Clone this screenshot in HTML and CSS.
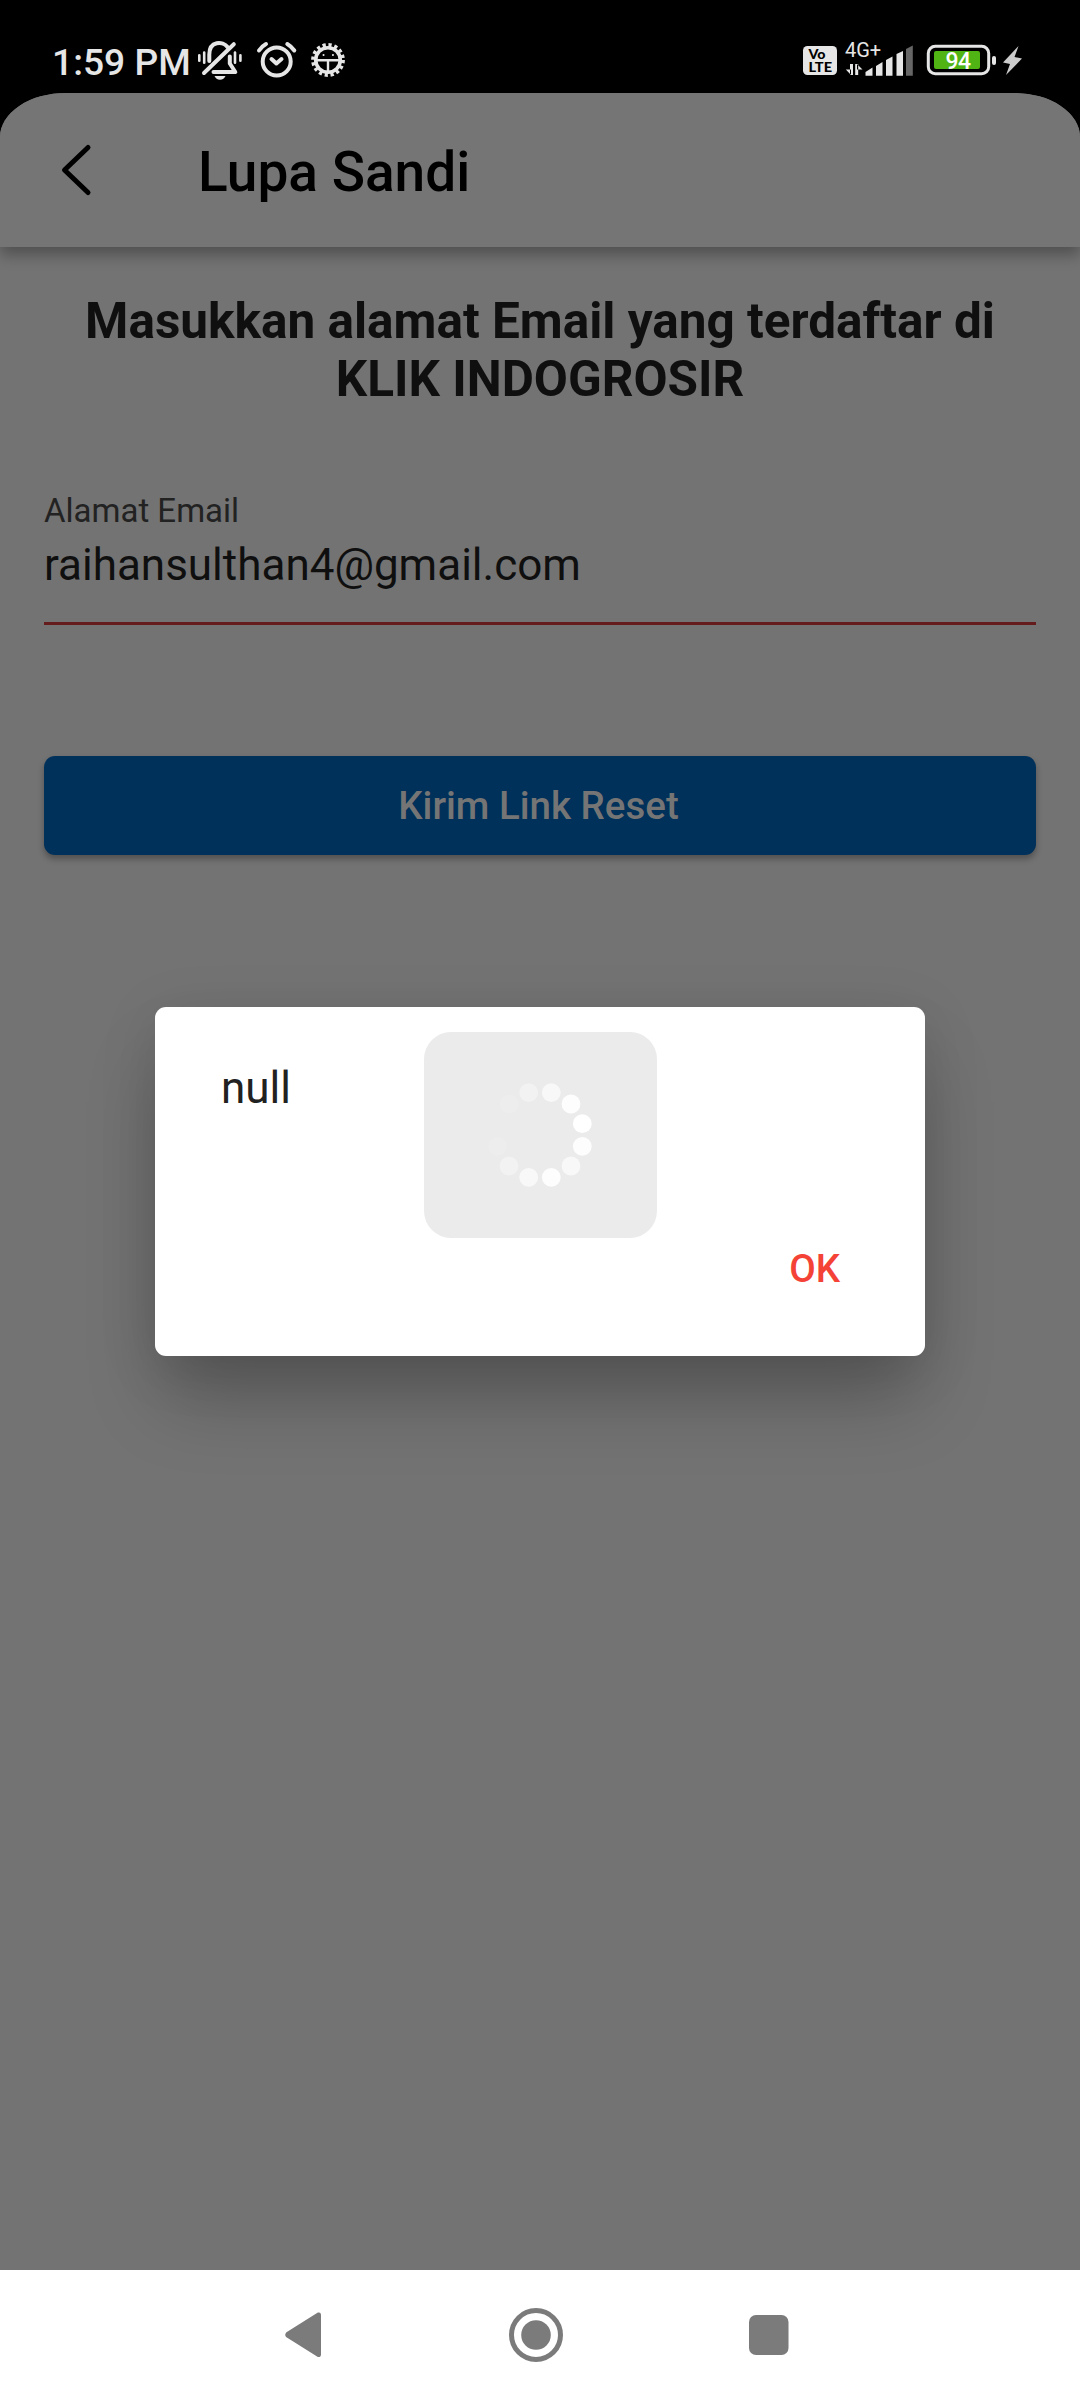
FILE: index.html
```html
<!DOCTYPE html>
<html lang="id">
<head>
<meta charset="utf-8">
<title>Lupa Sandi</title>
<link rel="stylesheet" href="styles.css">
</head>
<body>
<div class="screen">
  <header class="status">
    <span class="clock">1:59 PM</span>
    <svg class="status-left" width="156" height="48" viewBox="196 36 156 48" fill="none" stroke="#e6e6e6" stroke-linecap="round" stroke-linejoin="round">
      <g stroke-width="4">
        <path d="M233.8 44.2 204 73"/>
        <path d="M209.3 61V54.500C209.300 40.500 223 41 227.500 47"/>
        <path d="M229.800 56.500V63.500L235.300 72H213.500"/>
      </g>
      <path d="M199.300 55.200V60.800M204.200 52.500V62.800M235 52.500V62.800M240.400 55.200V60.800" stroke-width="2.600"/>
      <path d="M214.500 76H225.500Q224 79.700 220 79.700T214.500 76Z" fill="#e6e6e6" stroke="none"/>
      <circle cx="276.700" cy="61.500" r="14" stroke-width="4"/>
      <path d="M259 50.500Q261.500 46.500 266 44M287.300 44Q291.500 46.500 294.300 50.500" stroke-width="4"/>
      <path d="M271.500 59 276.400 63.500 281.500 59" stroke-width="4"/>
      <circle cx="328" cy="60" r="15" stroke-width="3.800" stroke-dasharray="3.200 2.690" stroke-linecap="butt"/>
      <circle cx="328" cy="60" r="12.300" stroke-width="3.600"/>
      <path d="M316 60.300H340M328 61V72" stroke-width="2.400"/>
      <path d="M323.500 55H323.600M332.900 55H333" stroke-width="2"/>
    </svg>
    <svg class="status-right" width="226" height="48" viewBox="800 36 226 48">
      <rect x="803" y="46" width="34" height="29" rx="4.500" fill="#e6e6e6"/>
      <text class="volte" x="808.500" y="58.700" textLength="17" lengthAdjust="spacingAndGlyphs">Vo</text>
      <text class="volte" x="808.500" y="71.700" textLength="23.500" lengthAdjust="spacingAndGlyphs">LTE</text>
      <text class="network" x="845" y="56.500" textLength="36">4G+</text>
      <g fill="#e6e6e6">
        <path d="M850 64V75H853V64ZM851 75 845.800 69.500H851ZM855.200 64V75H858.200V64ZM857 64 862.500 69.500H857Z"/>
        <path d="M865.500 75.700V72L872.500 67.500V75.700ZM876 75.700V66L882.500 62V75.700ZM886 75.700V60L892.500 56.500V75.700ZM896.500 75.700V54L903 51V75.700Z"/>
        <path d="M906 75.700V49L912.800 45.500V75.700Z" fill="#666"/>
        <rect x="992" y="56" width="4" height="9" rx="2"/>
        <path d="M1018.500 46 1003 62.500 1010 64 1006 75 1022 58.500 1014.500 57Z" fill="#ccc"/>
      </g>
      <rect x="928.300" y="46.300" width="60.400" height="27.400" rx="7" fill="none" stroke="#e6e6e6" stroke-width="3"/>
      <rect x="934" y="51" width="46" height="18" rx="2" fill="#50b414"/>
      <text class="charge" x="945.500" y="68.500" textLength="25.500">94</text>
    </svg>
  </header>

  <main class="app">
    <nav class="appbar">
      <svg class="back" width="34" height="56" viewBox="0 0 34 56" fill="none" stroke="#000" stroke-width="5" stroke-linecap="round" stroke-linejoin="round"><path d="M28 5.500 4.500 28 28 50.500"/></svg>
      <h1 class="title">Lupa Sandi</h1>
    </nav>
    <section class="content">
      <h2 class="heading">Masukkan alamat Email yang terdaftar di KLIK INDOGROSIR</h2>
      <div class="field">
        <span class="label">Alamat Email</span>
        <span class="value">raihansulthan4@gmail.com</span>
      </div>
      <div class="submit">Kirim Link Reset</div>
    </section>
  </main>

  <footer class="navbar">
    <svg width="40" height="54" viewBox="283 2308 40 54"><path d="M287 2333.200 318 2313.500Q320 2313 320 2315V2354.500Q320 2356.500 318 2356L287 2336.500Q285.500 2335 287 2333.200Z" fill="#7b7b7b" stroke="#7b7b7b" stroke-width="2" stroke-linejoin="round"/></svg>
    <svg width="54" height="54" viewBox="0 0 54 54"><circle cx="27" cy="27" r="24.500" fill="none" stroke="#7b7b7b" stroke-width="5"/><circle cx="27" cy="27" r="14.800" fill="#7b7b7b"/></svg>
    <svg width="40" height="40" viewBox="0 0 40 40"><rect width="39.500" height="40" rx="7" fill="#7b7b7b"/></svg>
  </footer>

  <div class="dialog">
    <p class="message">null</p>
    <span class="ok">OK</span>
    <div class="loader">
      <svg width="110" height="110" viewBox="-55 -55 110 110" fill="#fff">
        <circle r="9.400" cx="11.300" cy="-42.300" opacity=".65"/>
        <circle r="9.400" cx="31" cy="-31" opacity=".9"/>
        <circle r="9.400" cx="42.300" cy="-11.300"/>
        <circle r="9.400" cx="42.300" cy="11.300" opacity=".9"/>
        <circle r="9.400" cx="31" cy="31" opacity=".65"/>
        <circle r="9.400" cx="11.300" cy="42.300" opacity=".9"/>
        <circle r="9.400" cx="-11.300" cy="42.300" opacity=".65"/>
        <circle r="9.400" cx="-31" cy="31" opacity=".35"/>
        <circle r="9.400" cx="-42.300" cy="11.300" opacity=".1"/>
        <circle r="9.400" cx="-31" cy="-31" opacity=".1"/>
        <circle r="9.400" cx="-11.300" cy="-42.300" opacity=".35"/>
      </svg>
    </div>
  </div>
</div>
</body>
</html>
```
FILE: styles.css
```css
* { box-sizing: border-box; }
body { margin: 0; background: #000; font-family: Roboto, sans-serif; }
h1, h2, p { margin: 0; }
svg { display: block; flex: none; }
.screen { position: relative; width: 1080px; height: 2400px; display: flex; flex-direction: column; overflow: hidden; }

.status { height: 93px; padding: 36px 54px 9px 52px; display: flex; align-items: flex-start; }
.clock { width: 144px; font-size: 37.2px; line-height: 52px; font-weight: 500; color: #e6e6e6; white-space: nowrap; }
.status-right { margin-left: auto; }
.volte { font: 900 13px Lato, sans-serif; fill: #000; }
.network { font: 400 20px Roboto, sans-serif; fill: #e6e6e6; }
.charge { font: 500 23px Roboto, sans-serif; fill: #fff; }

.app { flex: 1; display: flex; flex-direction: column; background: #737373; border-radius: 66px 66px 0 0 / 44px 44px 0 0; overflow: hidden; }
.appbar { height: 154px; flex: none; padding: 0 60px; display: flex; align-items: center; background: #757575; box-shadow: 0 8px 14px rgba(0, 0, 0, .3); }
.back { margin-right: 104px; }
.title { padding-top: 3px; font-size: 55px; line-height: 64px; font-weight: 500; color: #000; }

.content { padding: 45px 44px 0; }
.heading { font-size: 49.5px; line-height: 58px; font-weight: 700; text-align: center; color: #0f0f0f; }
.field { margin-top: 79px; height: 138px; padding-top: 4px; display: flex; flex-direction: column; border-bottom: 3px solid #651c1c; }
.label { font-size: 33px; line-height: 40px; color: #222; }
.value { margin-top: 8px; font-size: 44px; line-height: 52px; color: #0f0f0f; }
.submit { margin-top: 130.5px; height: 99px; padding-right: 3px; display: flex; align-items: center; justify-content: center; border-radius: 11px; background: #00315a; box-shadow: 0 4px 6px rgba(0, 0, 0, .3); font-size: 38.5px; font-weight: 500; color: #757575; }

.navbar { height: 130px; flex: none; padding: 0 291px 0 283px; display: flex; align-items: center; justify-content: space-between; background: #fff; }

.dialog { position: absolute; left: 155px; top: 1007px; width: 770px; height: 349px; padding: 55px 85px 0 66px; display: flex; flex-direction: column; border-radius: 11px; background: #fff; box-shadow: 0 50px 76px -10px rgba(0, 0, 0, .25), 0 10px 60px rgba(0, 0, 0, .1); }
.message { font-size: 44px; line-height: 52px; color: #212121; }
.ok { margin-top: 132px; align-self: flex-end; font-size: 38.5px; line-height: 46px; font-weight: 500; color: #f44336; }
.loader { position: absolute; left: 268.5px; top: 24.5px; width: 233.5px; height: 206.5px; display: flex; align-items: center; justify-content: center; border-radius: 27px; background: #ebebeb; }
```
